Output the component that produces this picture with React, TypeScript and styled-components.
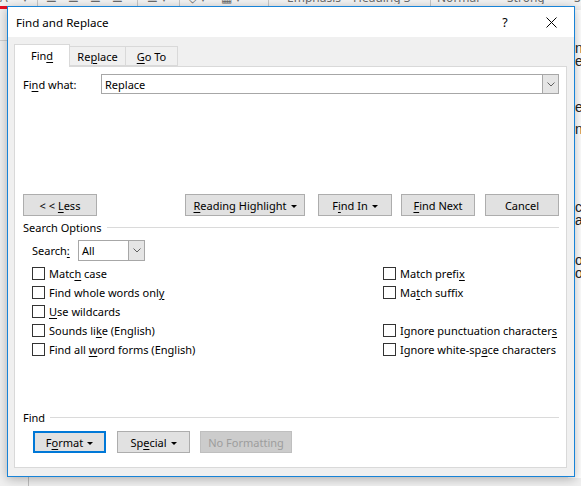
import styled, { createGlobalStyle } from "styled-components";

const FONT = `"Noto Sans", "Open Sans", sans-serif`;

const Global = createGlobalStyle`
  html, body { margin: 0; padding: 0; }
  body { font-family: ${FONT}; }
`;

/* ---------- word window behind the dialog ---------- */

const Desktop = styled.div`
  position: relative;
  width: 581px;
  height: 486px;
  overflow: hidden;
  background: #f0f0f0;
  font-family: ${FONT};
`;

const Ribbon = styled.div`
  position: absolute;
  left: 0;
  top: 0;
  right: 0;
  height: 6px;
  overflow: hidden;
  background: #f3f3f3;
  display: flex;
  align-items: flex-start;
`;

const RibbonItem = styled.span<{ $w: number }>`
  flex: none;
  width: ${(p) => p.$w}px;
  margin-top: -8px;
  font-size: 12px;
  line-height: 12px;
  color: #6a6a6a;
  white-space: nowrap;
  overflow: hidden;
`;

const RibbonSep = styled.span<{ $w: number }>`
  flex: none;
  width: ${(p) => p.$w}px;
  height: 6px;
  border-left: 1px solid #c6c6c6;
`;

const FontColorBar = styled.div`
  position: absolute;
  left: 0;
  top: 6px;
  width: 7px;
  height: 3px;
  background: #e81123;
`;

const GutterLine = styled.div`
  position: absolute;
  left: 0;
  top: 40px;
  width: 7px;
  height: 1px;
  background: #cfcfcf;
`;

const RulerLine = styled.div`
  position: absolute;
  left: 28px;
  top: 470px;
  width: 1px;
  height: 16px;
  background: #bdbdbd;
`;

const Page = styled.div`
  position: absolute;
  left: 568px;
  top: 10px;
  width: 20px;
  height: 468px;
  background: #ffffff;
`;

const PageText = styled.span<{ $top: number }>`
  position: absolute;
  left: 7px;
  top: ${(p) => p.$top}px;
  font-family: "Liberation Sans", Arial, sans-serif;
  font-size: 14px;
  line-height: 14px;
  color: #222;
  white-space: nowrap;
`;

/* ---------- dialog ---------- */

const Dialog = styled.div`
  position: absolute;
  left: 7px;
  top: 6px;
  width: 568px;
  height: 471px;
  box-sizing: border-box;
  border: 1px solid #1883d7;
  background: #f0f0f0;
  box-shadow: 0 2px 10px rgba(0, 0, 0, 0.28);
  display: flex;
  flex-direction: column;
  font-size: 11px;
  color: #000;
`;

const TitleBar = styled.div`
  height: 30px;
  flex: none;
  background: #ffffff;
  display: flex;
  align-items: center;
`;

const Title = styled.div`
  flex: 1;
  padding-left: 8px;
  font-size: 11.6px;
`;

const TitleButton = styled.div`
  width: 46px;
  height: 30px;
  display: flex;
  align-items: center;
  justify-content: center;
  font-size: 12.5px;
`;

const Body = styled.div`
  flex: 1;
  display: flex;
  flex-direction: column;
  padding: 7px 7px 8px 6px;
  min-height: 0;
`;

const TabRow = styled.div`
  display: flex;
  align-items: flex-end;
  height: 22px;
`;

const Tab = styled.div<{ $w: number; $active?: boolean }>`
  box-sizing: border-box;
  width: ${(p) => p.$w}px;
  height: ${(p) => (p.$active ? 23 : 20)}px;
  margin-left: ${(p) => (p.$active ? 0 : -1)}px;
  margin-bottom: ${(p) => (p.$active ? -1 : 0)}px;
  border: 1px solid #d9d9d9;
  border-bottom: ${(p) => (p.$active ? "none" : "1px solid #d9d9d9")};
  background: ${(p) => (p.$active ? "#ffffff" : "#f0f0f0")};
  position: relative;
  z-index: ${(p) => (p.$active ? 2 : 1)};
  display: flex;
  align-items: center;
  justify-content: center;
  padding-bottom: ${(p) => (p.$active ? 2 : 0)}px;
`;

const Panel = styled.div`
  flex: 1;
  background: #ffffff;
  border: 1px solid #d9d9d9;
  padding: 7px 7px 10px 8px;
  display: flex;
  flex-direction: column;
`;

const FindRow = styled.div`
  display: flex;
  align-items: center;
  height: 20px;
`;

const FieldLabel = styled.span<{ $w: number }>`
  flex: none;
  width: ${(p) => p.$w}px;
`;

const Combo = styled.div<{ $w?: number }>`
  box-sizing: border-box;
  ${(p) => (p.$w ? `width: ${p.$w}px; flex: none;` : "flex: 1;")}
  height: 100%;
  border: 1px solid #a7a7a7;
  display: flex;
  align-items: center;
  background: #ffffff;
`;

const ComboText = styled.span`
  flex: 1;
  padding-left: 3px;
`;

const DropButton = styled.span`
  width: 16px;
  height: 100%;
  box-sizing: border-box;
  border-left: 1px solid #a7a7a7;
  background: #e5e5e5;
  display: flex;
  align-items: center;
  justify-content: center;
`;

const ButtonRow = styled.div<{ $top: number; $indent?: number }>`
  display: flex;
  align-items: center;
  margin-top: ${(p) => p.$top}px;
  padding-left: ${(p) => p.$indent ?? 0}px;
`;

const Button = styled.div<{ $w: number; $gap?: number; $focus?: boolean; $disabled?: boolean }>`
  box-sizing: border-box;
  flex: none;
  width: ${(p) => p.$w}px;
  height: 22px;
  margin-left: ${(p) => p.$gap ?? 0}px;
  background: ${(p) => (p.$disabled ? "#cccccc" : "#e1e1e1")};
  border: ${(p) =>
    p.$focus ? "2px solid #0078d7" : p.$disabled ? "1px solid #bfbfbf" : "1px solid #adadad"};
  color: ${(p) => (p.$disabled ? "#9d9d9d" : "#000")};
  display: flex;
  align-items: center;
  justify-content: center;
  white-space: pre;
`;

const ButtonText = styled.span`
  white-space: pre;
`;

const Spacer = styled.div`
  flex: 1;
`;

const Caret = styled.span`
  display: inline-block;
  width: 0;
  height: 0;
  margin-left: 4px;
  vertical-align: middle;
  border-left: 3px solid transparent;
  border-right: 3px solid transparent;
  border-top: 3px solid #000;
`;

const SectionHeader = styled.div<{ $top: number }>`
  display: flex;
  align-items: center;
  height: 16px;
  margin-top: ${(p) => p.$top}px;
  &::after {
    content: "";
    flex: 1;
    height: 1px;
    margin-left: 5px;
    background: #dadada;
  }
`;

const SearchRow = styled.div`
  display: flex;
  align-items: center;
  height: 21px;
  margin-top: 5px;
  padding-left: 9px;
`;

const OptionGrid = styled.div`
  display: grid;
  grid-template-columns: 351px 1fr;
  grid-auto-rows: 19px;
  margin-top: 3px;
  padding-left: 9px;
`;

const Option = styled.label`
  display: flex;
  align-items: center;
  white-space: nowrap;
`;

const Box = styled.span`
  box-sizing: border-box;
  width: 13px;
  height: 13px;
  margin-right: 4px;
  border: 1px solid #333;
  background: #fff;
  flex: none;
`;

const U = styled.span`
  text-decoration: underline;
  text-underline-offset: 2px;
`;

const Chevron = () => (
  <svg width="8" height="5" viewBox="0 0 8 5">
    <path d="M0.5 0.5 L4 4 L7.5 0.5" fill="none" stroke="#606060" strokeWidth="1" />
  </svg>
);

const CloseIcon = () => (
  <svg width="11" height="11" viewBox="0 0 11 11">
    <path d="M0.5 0.5 L10.5 10.5 M10.5 0.5 L0.5 10.5" stroke="#000" strokeWidth="1" />
  </svg>
);

const leftOptions = [
  <>Matc<U>h</U> case</>,
  <>Find whole words onl<U>y</U></>,
  <><U>U</U>se wildcards</>,
  <>Sounds li<U>k</U>e (English)</>,
  <>Find all <U>w</U>ord forms (English)</>,
];

const rightOptions = [
  <>Match prefi<U>x</U></>,
  <>Ma<U>t</U>ch suffix</>,
  null,
  <>Ignore punctuation character<U>s</U></>,
  <>Ignore white-sp<U>a</U>ce characters</>,
];

const docFragments = [
  { top: 31, text: "n," },
  { top: 44, text: "e" },
  { top: 90, text: "e" },
  { top: 112, text: "n" },
  { top: 190, text: "cu" },
  { top: 203, text: "ar" },
  { top: 243, text: "o" },
  { top: 256, text: "o" },
];

export default function App() {
  return (
    <Desktop>
      <Global />
      <Ribbon>
        <RibbonItem $w={22}>A</RibbonItem>
        <RibbonItem $w={15}>▾</RibbonItem>
        <RibbonSep $w={8} />
        <RibbonItem $w={22}>☰</RibbonItem>
        <RibbonItem $w={22}>☰</RibbonItem>
        <RibbonItem $w={22}>☰</RibbonItem>
        <RibbonItem $w={25}>☰</RibbonItem>
        <RibbonSep $w={9} />
        <RibbonItem $w={32}>☰ ▾</RibbonItem>
        <RibbonSep $w={8} />
        <RibbonItem $w={33}>◇ ▾</RibbonItem>
        <RibbonItem $w={47}>▦ ▾</RibbonItem>
        <RibbonSep $w={18} />
        <RibbonItem $w={66}>Emphasis</RibbonItem>
        <RibbonItem $w={77}>Heading 3</RibbonItem>
        <RibbonSep $w={6} />
        <RibbonItem $w={70}>Normal</RibbonItem>
        <RibbonItem $w={67}>Strong</RibbonItem>
        <RibbonItem $w={20}>Su</RibbonItem>
      </Ribbon>
      <FontColorBar />
      <GutterLine />
      <RulerLine />
      <Page>
        {docFragments.map((f) => (
          <PageText key={f.top} $top={f.top}>
            {f.text}
          </PageText>
        ))}
      </Page>

      <Dialog>
        <TitleBar>
          <Title>Find and Replace</Title>
          <TitleButton>?</TitleButton>
          <TitleButton>
            <CloseIcon />
          </TitleButton>
        </TitleBar>
        <Body>
          <TabRow>
            <Tab $w={56} $active>
              <ButtonText>
                Fin<U>d</U>
              </ButtonText>
            </Tab>
            <Tab $w={57}>
              <ButtonText>
                Re<U>p</U>lace
              </ButtonText>
            </Tab>
            <Tab $w={53}>
              <ButtonText>
                <U>G</U>o To
              </ButtonText>
            </Tab>
          </TabRow>
          <Panel>
            <FindRow>
              <FieldLabel $w={78}>
                Fi<U>n</U>d what:
              </FieldLabel>
              <Combo>
                <ComboText>Replace</ComboText>
                <DropButton>
                  <Chevron />
                </DropButton>
              </Combo>
            </FindRow>

            <ButtonRow $top={100}>
              <Button $w={74}>
                <ButtonText>
                  {"< < "}
                  <U>L</U>ess
                </ButtonText>
              </Button>
              <Spacer />
              <Button $w={120}>
                <ButtonText>
                  <U>R</U>eading Highlight
                  <Caret />
                </ButtonText>
              </Button>
              <Button $w={74} $gap={13}>
                <ButtonText>
                  F<U>i</U>nd In
                  <Caret />
                </ButtonText>
              </Button>
              <Button $w={74} $gap={9}>
                <ButtonText>
                  <U>F</U>ind Next
                </ButtonText>
              </Button>
              <Button $w={74} $gap={10}>
                <ButtonText>Cancel</ButtonText>
              </Button>
            </ButtonRow>

            <SectionHeader $top={3}>Search Options</SectionHeader>
            <SearchRow>
              <FieldLabel $w={46}>
                Search<U>:</U>
              </FieldLabel>
              <Combo $w={67}>
                <ComboText>All</ComboText>
                <DropButton>
                  <Chevron />
                </DropButton>
              </Combo>
            </SearchRow>

            <OptionGrid>
              {leftOptions.map((left, i) => [
                <Option key={`l${i}`}>
                  <Box />
                  <span>{left}</span>
                </Option>,
                rightOptions[i] ? (
                  <Option key={`r${i}`}>
                    <Box />
                    <span>{rightOptions[i]}</span>
                  </Option>
                ) : (
                  <span key={`r${i}`} />
                ),
              ])}
            </OptionGrid>

            <SectionHeader $top={50}>Find</SectionHeader>
            <ButtonRow $top={6} $indent={10}>
              <Button $w={73} $focus>
                <ButtonText>
                  F<U>o</U>rmat
                  <Caret />
                </ButtonText>
              </Button>
              <Button $w={73} $gap={11}>
                <ButtonText>
                  Sp<U>e</U>cial
                  <Caret />
                </ButtonText>
              </Button>
              <Button $w={92} $gap={10} $disabled>
                <ButtonText>No Formatting</ButtonText>
              </Button>
            </ButtonRow>
          </Panel>
        </Body>
      </Dialog>
    </Desktop>
  );
}
